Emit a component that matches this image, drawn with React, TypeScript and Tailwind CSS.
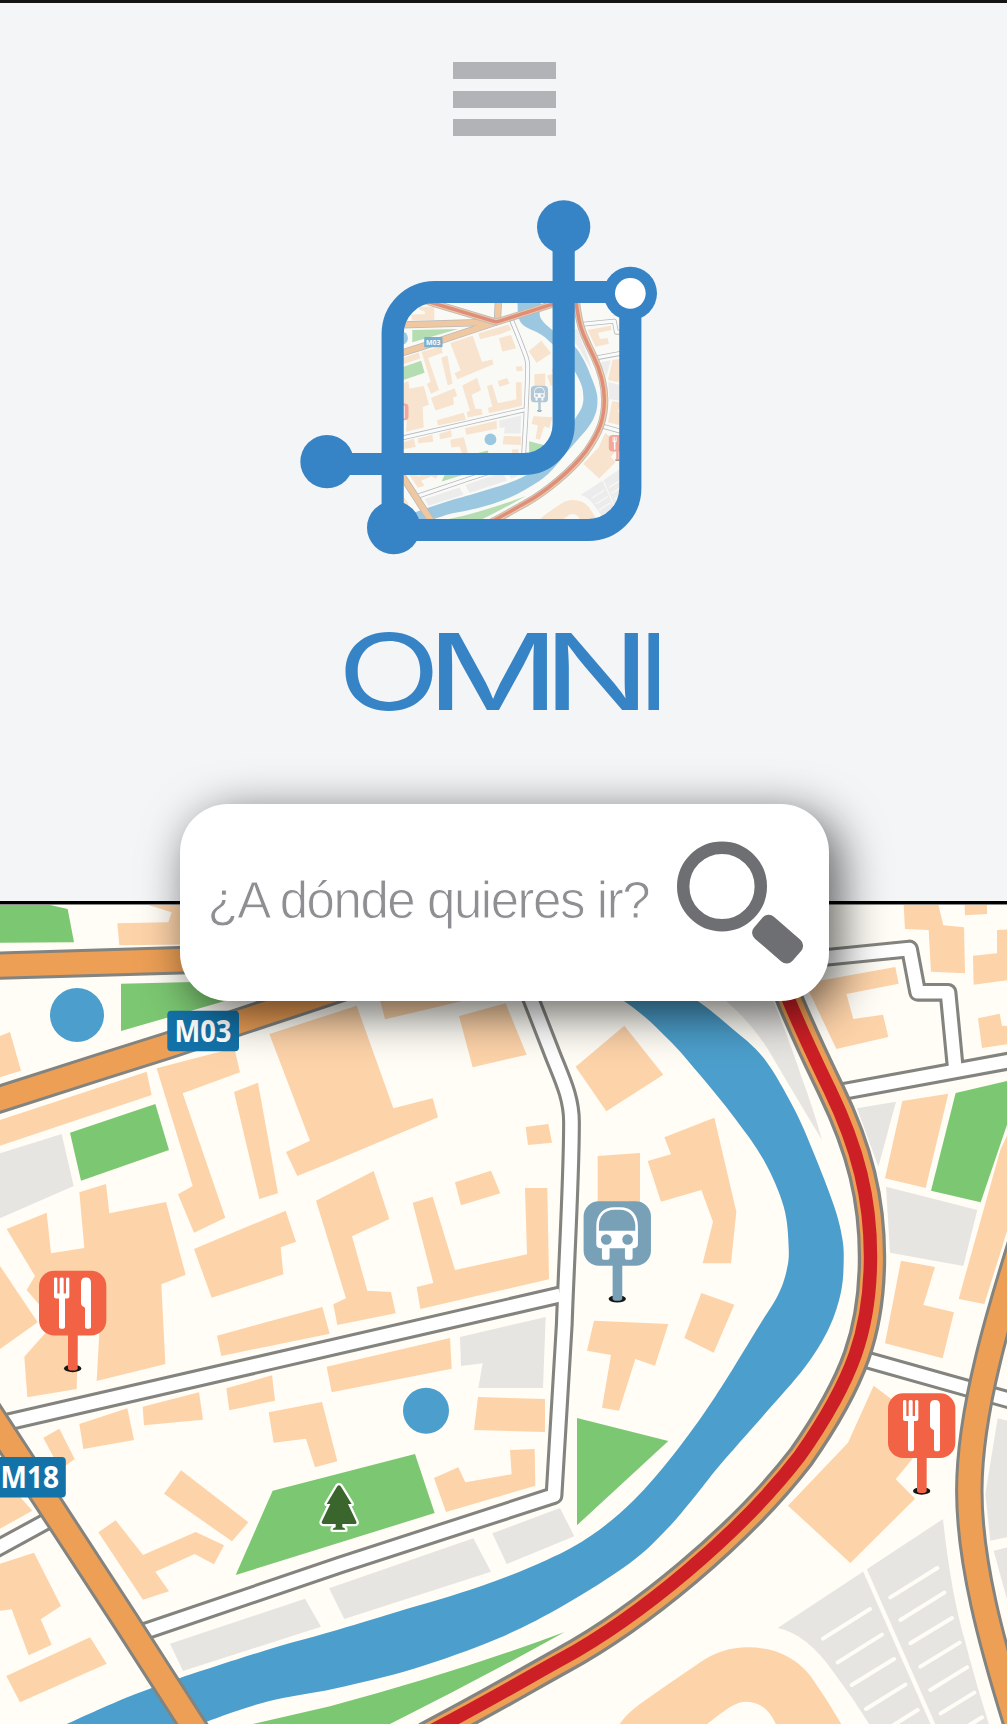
import React from "react";

type Pt = [number, number];

const TAN = "#fdd3a9";
const GREY = "#e6e5e2";
const GREEN = "#7cc772";
const CREAM = "#fffdf6";
const WATER = "#4c9fcc";
const EDGE = "#83837f";
const ROAD = "#ec9f55";
const BRAND = "#3684c5";

/** Smooth curve through a list of points. */
function smooth(pts: Pt[]): string {
  let d = "";
  for (let i = 0; i < pts.length - 1; i++) {
    const p0 = pts[Math.max(0, i - 1)];
    const p1 = pts[i];
    const p2 = pts[i + 1];
    const p3 = pts[Math.min(pts.length - 1, i + 2)];
    d += ` C${p1[0] + (p2[0] - p0[0]) / 6} ${p1[1] + (p2[1] - p0[1]) / 6} ${p2[0] - (p3[0] - p1[0]) / 6} ${
      p2[1] - (p3[1] - p1[1]) / 6
    } ${p2[0]} ${p2[1]}`;
  }
  return d;
}

const bankEast: Pt[] = [
  [624, 870], [620, 932], [660, 978], [698.7, 1001.7], [730, 1026.7], [763.7, 1058], [793.7, 1108], [813.7, 1153], [833.7, 1205],
  [842, 1236.7], [843.7, 1260], [841, 1292], [829, 1328], [805, 1367], [763, 1416], [720, 1465],
  [692, 1500], [667, 1529], [630, 1563], [563, 1605.7], [496.7, 1639], [413, 1669], [335, 1688.5],
  [266.7, 1701.7], [206.7, 1721.7], [190, 1730],
];
const bankWest: Pt[] = [
  [50, 1732], [66.7, 1724], [116.7, 1701.7], [151.7, 1688], [180, 1678], [266.7, 1650], [330, 1632],
  [396.7, 1612], [480, 1586.5], [546.7, 1560], [592, 1535], [634, 1500], [674, 1454], [715, 1397],
  [759, 1326], [778, 1295], [786.5, 1271], [788.7, 1248], [783.7, 1206.7], [763.7, 1160], [733.7, 1116.7],
  [700, 1075], [668, 1039], [625, 1001.7], [545, 955], [531, 870],
];
const RIVER = `M624 870${smooth(bankEast)} L50 1732${smooth(bankWest)}Z`;

const STREETS = [
  "M8 1422 L340 1345.7 L560 1295",
  "M500 925 L531.7 1001 L550 1048 C560 1075 571.5 1095 571.5 1122 C571.5 1180 566 1270 564.3 1324 L554 1495.5 L340 1565 L140 1633",
  "M780 962 L909.5 949 L917.7 992.3 L948 992.3 L955.3 1068",
  "M835 1093 L1020 1059",
  "M860 1358 L1020 1403",
  "M-5 1549.5 L50 1519.5",
];

const AVENUES = [
  "M-5 965.8 L180 960.3 L450 953",
  "M-5 1100.6 L100 1067 L166.7 1046 L450 952",
  "M457 870 L453 952",
  "M-20 1398 L18.3 1456.7 L126 1621.7 L202 1740",
  "M1026 1228 C1000 1310 969.3 1410 969.3 1490.7 C969.3 1560 990 1640 1020 1735",
];

const RED_EAST =
  "M760 860 C766 915 775 965 790.7 1002 C808 1043 820 1067 831 1090 C860 1150 872 1200 872 1257 C872 1330 855 1380 801 1457 C740 1536 640 1618 563 1660 C525 1681 490 1702 425 1736";
const RED_NORTH = "M180 872 L216 883 L440 950 Q448 953 458 950 L690 876";

interface Tile {
  at: string;
  shapes: [string, string][];
}

/** Blocks, parks and car parks; each tile uses thirds of a pixel as its unit. */
const TILES: Tile[] = [
  {
    at: "translate(0 890) scale(.33333)",
    shapes: [
      [GREEN, "0,10 120,38 203,57 222,157 0,158"],
      [TAN, "352,100 505,97 515,67 445,45 445,10 620,10 620,163 358,166"],
      [GREEN, "363,281 900,268 363,423"],
      [TAN, "0,438 30,426 63,542 0,562"],
      [TAN, "0,690 440,545 455,615 0,767"],
      [GREY, "0,790 185,732 221,888 0,985"],
      [GREEN, "210,728 466,642 507,780 243,872"],
      [TAN, "470,535 703,474 720,547 548,610 676,983 582,1028 534,913 578,888"],
      [TAN, "702,606 774,578 834,910 778,927"],
      [TAN, "808,432 1070,347 1180,655 1298,625 1314,682 990,818 892,858 858,786 930,752"],
      [TAN, "582,1077 857,962 888,1055 842,1072 850,1153 635,1223"],
    ],
  },
  {
    at: "translate(0 1260) scale(.33333)",
    shapes: [
      [TAN, "0,18 113,187 0,267"],
      [TAN, "137,218 73,290 82,412 230,387 235,190"],
      [TAN, "80,90 105,48 20,-93 140,-142 153,-20 253,-36 238,-203 318,-228 328,-140 498,-174 557,44 484,73 496,312 290,363 300,180 250,200 140,160"],
      [TAN, "651,227 967,141 989,221 664,288"],
      [TAN, "238,492 382,445 402,540 250,567"],
      [TAN, "428,440 597,397 609,479 432,496"],
      [TAN, "679,385 816,346 825,422 688,451"],
      [TAN, "130,533 178,506 224,597 195,618 175,618"],
      [TAN, "806,457 966,426 1012,604 945,622 918,536 821,548"],
      [TAN, "543,631 745,787 696,844 492,701"],
      [TAN, "295,817 347,781 429,885 587,816 672,856 642,913 584,882 466,935 507,994 429,1019"],
      [TAN, "0,700 50,700 97,752 0,806"],
      [TAN, "0,911 102,878 183,1038 122,1078 155,1154 86,1186 35,1048 0,1052"],
      [TAN, "19,1248 270,1132 320,1211 60,1327"],
      [GREY, "510,1151 915,1016 963,1100 549,1233"],
    ],
  },
  {
    at: "translate(330 980) scale(.33333)",
    shapes: [
      [TAN, "148,50 500,-55 530,10 400,62 165,118"],
      [TAN, "387,108 527,70 590,224 428,262"],
      [TAN, "883,137 1000,284 829,394 737,260"],
      [TAN, "587,441 655,432 666,488 594,495"],
      [TAN, "803,528 930,519 930,680 803,680"],
      [TAN, "375,607 483,572 511,640 393,676"],
      [TAN, "248,668 308,650 375,870 591,823 585,624 652,624 657,898 271,987 260,921 310,909"],
      [TAN, "-42,662 131,573 178,717 66,769 112,932 183,936 197,1000 22,1035 10,973 48,955"],
      [TAN, "792,1022 1015,1032 975,1157 916,1137 867,1292 816,1283 843,1125 771,1112"],
      [GREY, "390,1071 647,1011 639,1224 445,1224 458,1150 393,1158"],
    ],
  },
  {
    at: "translate(330 1324) scale(.33333)",
    shapes: [
      [TAN, "-10,128 360,42 365,134 5,205"],
      [TAN, "444,219 645,225 645,324 432,318"],
      [TAN, "312,462 385,430 406,475 545,451 540,378 614,375 616,485 348,564"],
      [GREEN, "-172,500 255,390 314,567 -283,753"],
      [GREEN, "741,282 1015,351 741,604"],
      [GREY, "487,628 690,552 733,637 530,720"],
      [GREY, "-3,793 430,643 483,743 43,885"],
    ],
  },
  {
    at: "translate(667 890) scale(.33333)",
    shapes: [
      [TAN, "-8,742 142,683 208,965 192,1120 107,1120 138,995 103,900 -18,935 -58,813 12,793"],
      [TAN, "103,1209 202,1244 140,1388 52,1344"],
      [TAN, "708,10 800,10 815,48 829,106 891,112 894,250 792,245 785,120 714,117"],
      [TAN, "892,10 960,10 960,72 894,76"],
      [TAN, "990,120 1040,118 1040,268 920,284 918,197 990,190"],
      [TAN, "933,385 998,371 1005,408 1040,406 1040,460 945,474"],
      [TAN, "415,280 685,231 695,281 538,312 559,387 648,374 664,441 508,477"],
      [GREY, "570,655 687,635 634,830"],
      [TAN, "706,633 844,611 776,894 654,865"],
      [GREEN, "866,609 1040,568 1040,645 941,937 792,902"],
      [GREY, "657,890 931,960 889,1128 669,1088"],
      [TAN, "1030,715 1040,960 952,1242 875,1227 1000,780"],
      [TAN, "702,1112 804,1131 769,1245 861,1267 827,1405 654,1360"],
    ],
  },
  {
    at: "translate(667 1324) scale(.33333)",
    shapes: [
      [TAN, "620,185 680,230 760,375 686,466 744,524 550,717 363,545 543,356"],
      [GREY, "992,283 1040,294 1040,636 970,650 955,510"],
      [GREY, "980,680 1040,666 1040,900"],
    ],
  },
];

function Shield({ x, y, w, tx, tw, label }: { x: number; y: number; w: number; tx: number; tw: number; label: string }) {
  return (
    <g>
      <rect x={x} y={y} width={w} height="40.5" rx="4" fill="#1372a8" />
      <text
        x={tx}
        y={y + 31}
        textLength={tw}
        lengthAdjust="spacingAndGlyphs"
        fill="#fff"
        fontFamily='"Open Sans", "Noto Sans", sans-serif'
        fontWeight="700"
        fontSize="29.5"
      >
        {label}
      </text>
    </g>
  );
}

function Pin({ at, color, children }: { at: string; color: string; children: React.ReactNode }) {
  return (
    <g transform={at}>
      <ellipse cx="101" cy="293" rx="26" ry="11" fill="#161616" />
      <path d="M87 180 H116 V292 Q116 299 101 299 Q87 299 87 292Z" fill={color} />
      <rect width="202" height="194" rx="46" fill={color} />
      {children}
    </g>
  );
}

function Cutlery() {
  return (
    <path
      fill="#fff"
      d="M45 24 Q45 20 50 20 Q55 20 55 24 V68 H62 V24 Q62 20 68 20 Q74 20 74 24 V68 H81 V24 Q81 20 86 20 Q91 20 91 24 V77 Q91 83 85 83 H78 V168 Q78 174 69 174 Q60 174 60 168 V83 H51 Q45 83 45 77Z M156 36 V168 Q156 174 147 174 Q138 174 138 168 V111 L129 105 Q126 102 126 96 V36 Q126 20 141 20 Q156 20 156 36Z"
    />
  );
}

function CityMap({ red = "#cc2026" }: { red?: string }) {
  return (
    <g>
      <rect x="-60" y="840" width="1130" height="900" fill={CREAM} />
      {TILES.map((t) => (
        <g key={t.at} transform={t.at}>
          {t.shapes.map(([fill, points]) => (
            <polygon key={points} fill={fill} points={points} />
          ))}
        </g>
      ))}

      <g transform="translate(667 890) scale(.33333)">
        <path fill={GREY} d="M120 280 L180 335 Q260 405 310 490 Q380 610 465 750 Q440 660 405 565 Q370 460 320 335 L295 270Z" />
      </g>
      <g transform="translate(330 1324) scale(.33333)">
        <path fill={GREEN} d="M704 924 Q380 1045 0 1147 L-250 1204 H172 Q450 1065 704 924Z" />
        <circle cx="288" cy="260" r="69" fill={WATER} />
      </g>
      <circle cx="77" cy="1015" r="27" fill={WATER} />

      <g transform="translate(667 1324) scale(.33333)">
        <path fill={GREY} d="M332 912 L828 585 Q852 810 895 955 Q930 1090 967 1204 H609 Q560 1125 500 1045 Q420 930 332 912Z" />
        <path stroke={CREAM} strokeWidth="13" d="M590 730 L802 1210" />
        <path
          stroke={CREAM}
          strokeWidth="12"
          strokeLinecap="round"
          d="M468 944 L609 855 M512 1015 L645 932 M554 1083 L681 1005 M597 1155 L715 1082 M640 1228 L752 1158 M670 820 L811 732 M700 888 L832 806 M730 958 L855 882 M760 1028 L878 956 M790 1098 L900 1030 M821 1168 L922 1106 M850 1238 L945 1180"
        />
        <path
          fill={TAN}
          d="M0 1083 L100 1015 Q165 970 243 970 Q360 970 430 1055 Q480 1125 525 1204 H328 Q300 1135 240 1133 Q215 1132 188 1150 Q150 1175 116 1204 H-145 Q-120 1165 -60 1125Z"
        />
      </g>

      <path d={RIVER} fill={WATER} />

      <g fill="none" strokeLinejoin="round">
        {STREETS.map((d) => (
          <path key={d} d={d} stroke={EDGE} strokeWidth="18.8" />
        ))}
        {STREETS.map((d) => (
          <path key={d} d={d} stroke="#fff" strokeWidth="12.6" />
        ))}
        {AVENUES.map((d) => (
          <path key={d} d={d} stroke={EDGE} strokeWidth="28.4" />
        ))}
        <path d={RED_EAST} stroke={EDGE} strokeWidth="28.4" />
        {AVENUES.map((d) => (
          <path key={d} d={d} stroke={ROAD} strokeWidth="22.4" />
        ))}
        <path d={RED_EAST} stroke={ROAD} strokeWidth="21.8" />
        <path d={RED_EAST} stroke={red} strokeWidth="13.4" transform="translate(-1.5 -.8)" />
        <path d={RED_NORTH} stroke={EDGE} strokeWidth="28" />
        <path d={RED_NORTH} stroke={ROAD} strokeWidth="22" />
        <path d={RED_NORTH} stroke={red} strokeWidth="13.4" />
      </g>

      <Shield x={167.3} y={1010.7} w={71.7} tx={174.5} tw={57} label="M03" />
      <Shield x={-6} y={1457} w={71.8} tx={0.5} tw={58.5} label="M18" />

      <g transform="translate(330 1324) scale(.33333)">
        <path
          fill="#3a662d"
          stroke="#fff"
          strokeWidth="14"
          strokeLinejoin="round"
          style={{ paintOrder: "stroke" }}
          d="M27 484 Q31 484 34 490 L65 540 H54 L79 593 Q81 600 75 600 H37 V610 Q45 611 46 617 H8 Q9 611 17 610 V600 H-20 Q-27 598 -24 592 L1 540 H-10 L20 490 Q23 484 27 484Z"
        />
      </g>

      <Pin at="translate(39 1270.8) scale(.33333)" color="#f26346">
        <Cutlery />
      </Pin>
      <Pin at="translate(888 1393.3) scale(.33333)" color="#f26346">
        <Cutlery />
      </Pin>
      <Pin at="translate(583.6 1201.2) scale(.33333)" color="#78a1b7">
        <path
          fill="#fff"
          fillRule="evenodd"
          d="M38 76 C38 38 60 18 92 18 H110 C142 18 163 38 163 76 V128 Q163 141 150 141 H147 V168 Q147 176 139 176 H132 Q124 176 124 168 V141 H78 V168 Q78 176 70 176 H63 Q55 176 55 168 V141 H50 Q38 141 38 128Z M46 89 H155 V72 C153 45 136 26 110 26 H92 C64 26 47 45 46 72Z"
        />
        <circle cx="68" cy="115" r="16" fill="#78a1b7" />
        <circle cx="132" cy="115" r="16" fill="#78a1b7" />
      </Pin>
    </g>
  );
}

function Logo() {
  const frame = "M338 1043 V462 A126 126 0 0 1 464 336 H1051 V924 A126 126 0 0 1 925 1050 H338";
  return (
    <svg className="block h-[356px] w-[407px]" viewBox="300 200 407 356">
      <clipPath id="logo-frame">
        <path transform="translate(280 180) scale(.33333)" d={`${frame}Z`} />
      </clipPath>
      <g clipPath="url(#logo-frame)">
        <g opacity=".52" transform="translate(381.3 78) scale(.2562)">
          <CityMap red="#cc3008" />
        </g>
      </g>
      <g transform="translate(280 180) scale(.33333)" stroke={BRAND} strokeWidth="66.5" fill="none">
        <path d={frame} />
        <path d="M851 142 V732 A119 119 0 0 1 732 852 H141" />
        <g fill={BRAND} stroke="none">
          <circle cx="851" cy="141" r="80" />
          <circle cx="141" cy="845" r="80" />
          <circle cx="341" cy="1043" r="80" />
          <circle cx="1051" cy="340" r="80" />
        </g>
        <circle cx="1051" cy="340" r="46" fill="#fff" stroke="none" />
      </g>
    </svg>
  );
}

function Wordmark() {
  return (
    <svg className="mt-[64px] block h-[110px] w-[347px] overflow-visible" viewBox="330 620 347 110">
      <text fill={BRAND} fontFamily="Inter, sans-serif" fontWeight="400" fontSize="106" y="709.7">
        <tspan x="337.5" textLength="103" lengthAdjust="spacingAndGlyphs">O</tspan>
        <tspan x="426" textLength="134" lengthAdjust="spacingAndGlyphs">M</tspan>
        <tspan x="543" textLength="107.5" lengthAdjust="spacingAndGlyphs">N</tspan>
        <tspan x="638.5" textLength="30.5" lengthAdjust="spacingAndGlyphs">I</tspan>
      </text>
    </svg>
  );
}

export default function App() {
  return (
    <main className="relative flex h-[1724px] w-[1007px] flex-col overflow-hidden bg-[#f3f5f7]">
      <header className="flex h-[904px] flex-col items-center border-t-[3px] border-b-[3px] border-t-[#141414] border-b-black">
        <button aria-label="Menú" className="mt-[59px] ml-[2px] flex w-[103px] flex-col gap-[11.7px]">
          <span className="h-[17px] bg-[#b1b3b6]" />
          <span className="h-[17px] bg-[#b1b3b6]" />
          <span className="h-[17px] bg-[#b1b3b6]" />
        </button>
        <div className="mt-[63.6px]">
          <Logo />
        </div>
        <Wordmark />
      </header>

      <svg className="block h-[820px] w-[1007px] border-t border-[#8a8a88]" viewBox="0 905 1007 819">
        <CityMap />
      </svg>

      <div className="absolute top-[804px] left-[179.5px] flex h-[197px] w-[649px] items-center rounded-[48px] bg-white shadow-[10px_11px_48px_rgba(0,0,0,0.65)]">
        <span className="mb-[3px] ml-[28px] w-[444px] whitespace-nowrap font-['Liberation_Sans',Arial,sans-serif] text-[51px] leading-[60px] tracking-[-1.45px] text-[#8e8f93] [-webkit-text-stroke:0.9px_white]">
          ¿A dónde quieres ir?
        </span>
        <svg className="ml-[22px] block h-[130px] w-[130px]" viewBox="674 838 130 130">
          <circle cx="722" cy="886.5" r="38.8" fill="none" stroke="#6e6f73" strokeWidth="12.4" />
          <rect x="-25.5" y="-14.5" width="51" height="29" rx="8" fill="#6e6f73" transform="translate(777.6 939.2) rotate(41)" />
        </svg>
      </div>
    </main>
  );
}
